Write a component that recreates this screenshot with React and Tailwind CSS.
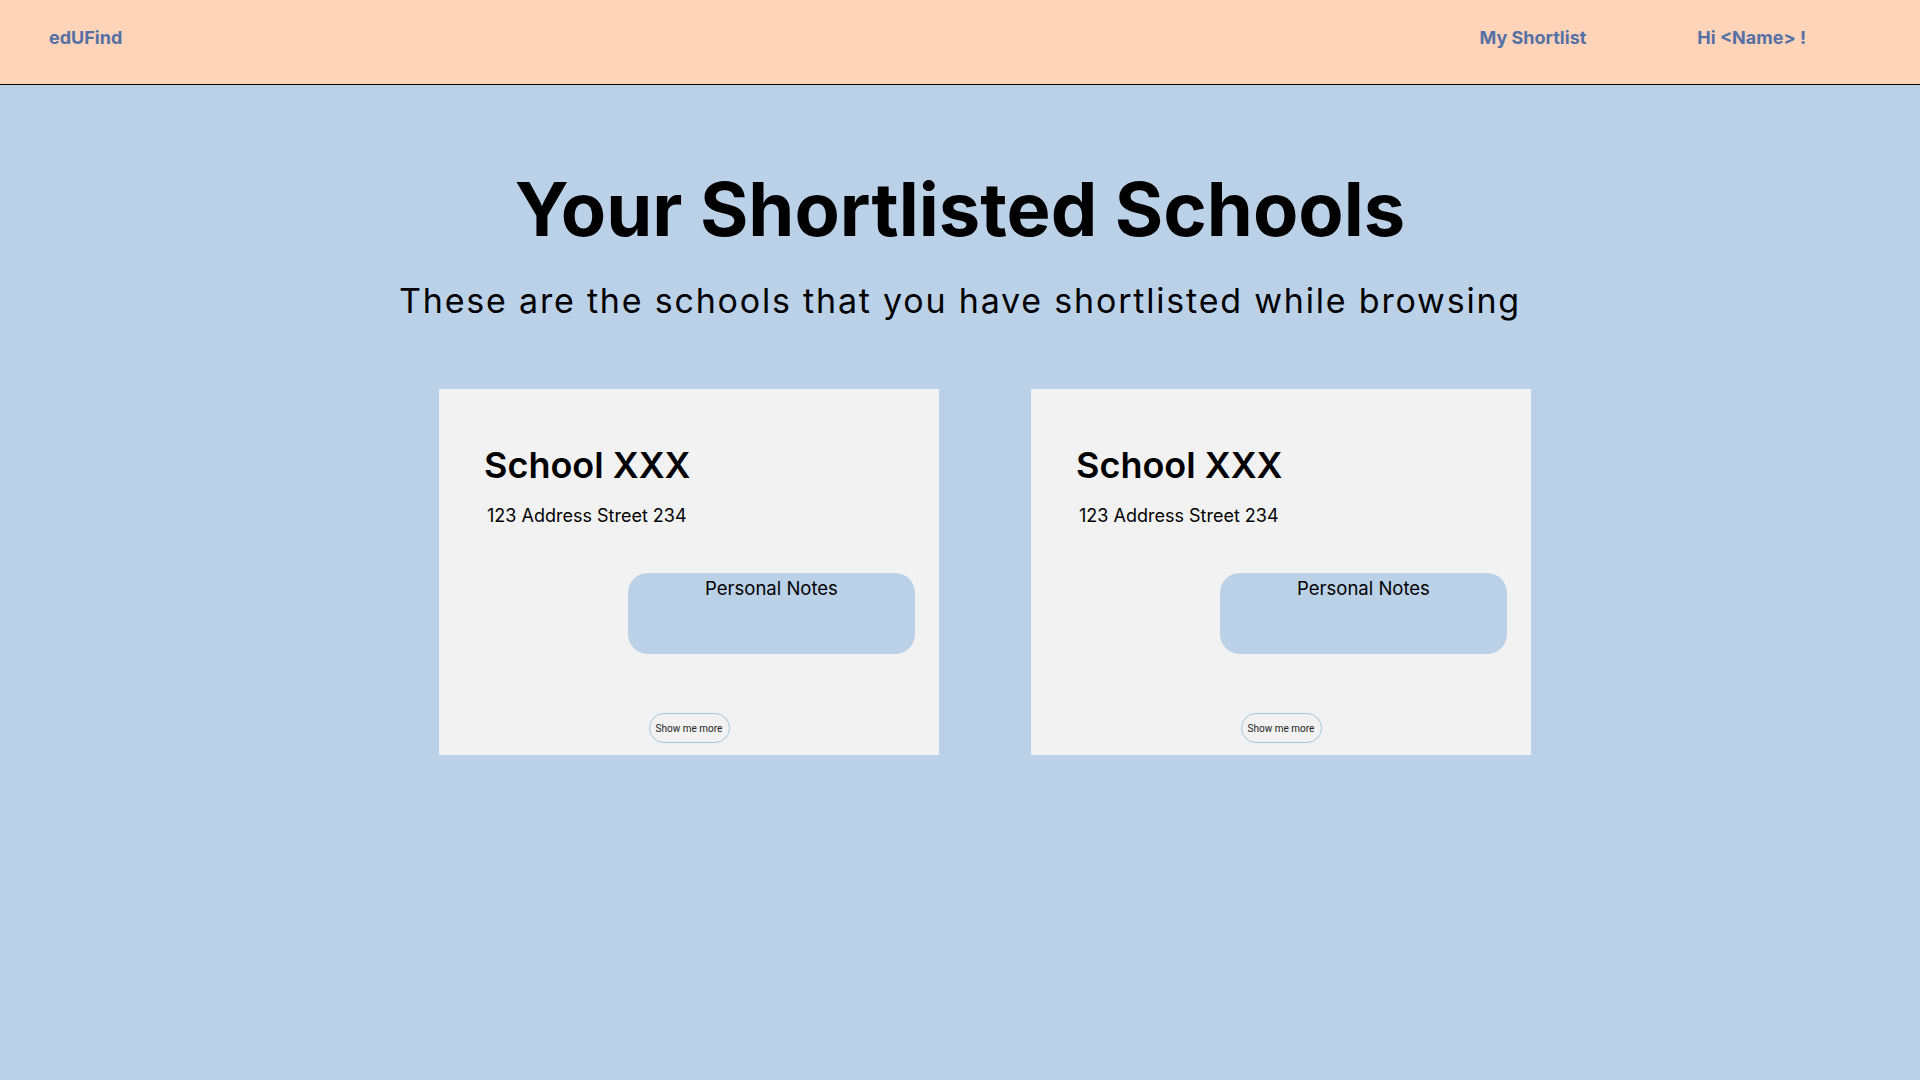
import React from "react";

function Card() {
  return (
    <div className="w-[500px] h-[366px] bg-[#f2f2f2] flex flex-col pl-[45px] pt-[52px]">
      <h2 className="text-[36px] leading-[48px] font-semibold text-black font-['Inter',sans-serif]">School XXX</h2>
      <p className="mt-[13px] ml-[3px] text-[18px] leading-[28px] text-black font-['Inter',sans-serif]">123 Address Street 234</p>
      <div className="mt-[43px] self-end mr-[24px] w-[287px] h-[81px] rounded-[20px] bg-[#bbd1e8] flex justify-center">
        <span className="mt-[1px] text-[18.5px] leading-[28px] text-black font-['Inter',sans-serif]">Personal Notes</span>
      </div>
      <div className="mt-auto mb-[12px] -ml-[45px] flex justify-center">
        <button className="w-[81px] h-[30px] rounded-full border border-[#9cc8e0] text-[10px] text-[#222] font-['Roboto',sans-serif] bg-transparent">
          Show me more
        </button>
      </div>
    </div>
  );
}

export default function App() {
  return (
    <div className="min-h-screen w-full bg-[#bbd1e8]">
      <header className="h-[85px] bg-[#ffd4b8] border-b border-black flex items-center pb-[9px] pl-[49px] pr-[114px] font-['Inter',sans-serif] font-bold text-[18px] text-[#5470a5]">
        <span>edUFind</span>
        <nav className="ml-auto flex items-center gap-[111px]">
          <span>My Shortlist</span>
          <span>Hi &lt;Name&gt; !</span>
        </nav>
      </header>
      <main className="flex flex-col items-center pt-[79px]">
        <h1 className="text-[74px] leading-[90px] font-bold text-black font-['Inter',sans-serif]">Your Shortlisted Schools</h1>
        <p className="mt-[23px] text-[34px] leading-[48px] tracking-[1.8px] text-black font-['Inter',sans-serif]">These are the schools that you have shortlisted while browsing</p>
        <div className="mt-[64px] flex gap-[92px] pl-[50px]">
          <Card />
          <Card />
        </div>
      </main>
    </div>
  );
}
